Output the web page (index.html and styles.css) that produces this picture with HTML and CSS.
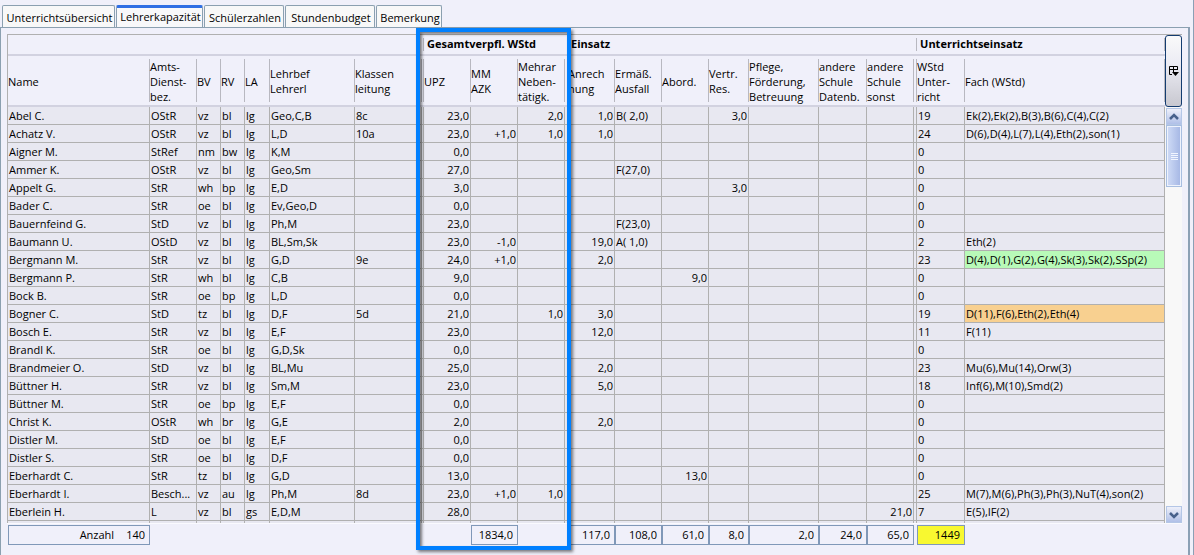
FILE: index.html
```html
<!DOCTYPE html>
<html lang="de">
<head>
<meta charset="utf-8">
<title>Lehrerkapazität</title>
<link rel="stylesheet" href="styles.css">
</head>
<body>
<div class="window">
  <nav class="tabs" role="tablist">
    <button class="tab tab-1" role="tab">Unterrichtsübersicht</button>
    <button class="tab tab-2 active" role="tab" aria-selected="true">Lehrerkapazität</button>
    <button class="tab tab-3" role="tab">Schülerzahlen</button>
    <button class="tab tab-4" role="tab">Stundenbudget</button>
    <button class="tab tab-5" role="tab">Bemerkung</button>
  </nav>
  <main class="panel">
    <div class="view">
      <div class="scroller">
        <table class="grid">
          <colgroup class="columns"></colgroup>
          <thead>
            <tr class="groups">
              <th colspan="7"></th><th class="sep"></th>
              <th colspan="3" class="plain">Gesamtverpfl. WStd</th><th class="sep"></th>
              <th colspan="7" class="plain">Einsatz</th><th class="sep"></th>
              <th colspan="2">Unterrichtseinsatz</th>
            </tr>
            <tr class="heads">
              <th>Name</th><th>Amts-<br>Dienst-<br>bez.</th><th>BV</th><th>RV</th><th>LA</th>
              <th>Lehrbef<br>Lehrerl</th><th>Klassen<br>leitung</th><th class="sep"></th>
              <th>UPZ</th><th>MM<br>AZK</th><th>Mehrar<br>Neben-<br>tätigk.</th><th class="sep"></th>
              <th>Anrech<br>nung</th><th>Ermäß.<br>Ausfall</th><th>Abord.</th><th>Vertr.<br>Res.</th>
              <th>Pflege,<br>Förderung,<br>Betreuung</th><th>andere<br>Schule<br>Datenb.</th>
              <th>andere<br>Schule<br>sonst</th><th class="sep"></th>
              <th>WStd<br>Unter-<br>richt</th><th>Fach (WStd)</th>
            </tr>
          </thead>
          <tbody id="rows"></tbody>
        </table>
      </div>
      <div class="side">
        <button class="column-button" aria-label="Spalten">
          <svg width="12" height="12" viewBox="0 0 12 12"><path d="M1.500 9.500V1.500H9.500V5M1.500 4.500H9.500M5.500 1.500V7M1.500 9.500H4" fill="none" stroke="#000"/><path d="M4 7H11L7.500 11Z"/></svg>
        </button>
        <div class="track">
          <button class="arrow" aria-label="Nach oben"><svg width="10" height="8" viewBox="0 0 10 8"><path d="M1 6L5 2L9 6" fill="none" stroke="#47618c" stroke-width="2.500"/></svg></button>
          <div class="thumb"><i></i><i></i><i></i><i></i></div>
          <button class="arrow down" aria-label="Nach unten"><svg width="10" height="8" viewBox="0 0 10 8"><path d="M1 2L5 6L9 2" fill="none" stroke="#47618c" stroke-width="2.500"/></svg></button>
        </div>
      </div>
    </div>
    <div class="summary">
      <table class="grid totals">
        <colgroup class="columns"></colgroup>
        <tbody><tr>
          <td class="box">Anzahl<span class="count">140</span></td><td colspan="8"></td>
          <td class="box">1834,0</td><td colspan="2"></td>
          <td class="box">117,0</td><td class="box">108,0</td><td class="box">61,0</td><td class="box">8,0</td>
          <td class="box">2,0</td><td class="box">24,0</td><td class="box">65,0</td><td></td>
          <td class="box total">1449</td><td></td>
        </tr></tbody>
      </table>
    </div>
    <div class="highlight"></div>
  </main>
</div>
<script src="table.js"></script>
</body>
</html>
```
FILE: styles.css
```css
* { box-sizing: border-box; }

body {
  margin: 0;
  background: #f0f0fa;
  color: #000;
  font: 11px/15px "Open Sans", "Noto Sans", sans-serif;
}

button { font: inherit; color: inherit; padding: 0; margin: 0; }

.window {
  display: flex;
  flex-direction: column;
  height: 100vh;
  padding-right: 3px;
  border-right: 1px solid #8ba0b5;
}

.tabs {
  display: flex;
  align-items: flex-end;
  gap: 1px;
  height: 27px;
  padding-left: 2px;
}

.tab {
  height: 22px;
  padding: 2px 0 0 2px;
  border: 1px solid #8ba0b0;
  border-bottom: 0;
  border-radius: 2px 2px 0 0;
  background: #f8f8f8;
  white-space: nowrap;
}
.tab-1 { width: 113px; }
.tab-2 { width: 87px; }
.tab-3 { width: 80px; }
.tab-4 { width: 90px; }
.tab-5 { width: 66px; }
.tab.active { border-top: 3px solid #2f6fe4; background: #f8f8fa; padding: 0 0 3px 2px; }

.panel {
  position: relative;
  flex: 1;
  min-height: 0;
  display: flex;
  flex-direction: column;
  padding: 6px 6px 10px 6px;
  border: 1px solid #8ba0b0;
  border-right: 2px solid #8ba0b5;
  border-bottom: 0;
}

.view { flex: 1; min-height: 0; display: flex; border-top: 1px solid #b0b0b0; border-bottom: 1px solid #fafafe; }
.scroller { flex: 1; min-width: 0; overflow: hidden; border-left: 1px solid #b0b0b0; }

.grid { width: 100%; table-layout: fixed; border-collapse: separate; border-spacing: 0; }
.w-name { width: 142px; }
.w-amt { width: 47px; }
.w-code { width: 24px; }
.w-la { width: 25px; }
.w-lehr { width: 85px; }
.w-klass { width: 67px; }
.w-edge { width: 2px; }
.w-gap { width: 3px; }
.w-vertr { width: 40px; }
.w-pflege { width: 70px; }
.w-sch { width: 48px; }

th {
  padding: 1px 0 0;
  text-align: left;
  font-weight: 400;
  white-space: nowrap;
  border-bottom: 2px solid #d2d2e0;
  background: linear-gradient(#b8b8c0, #b8b8c0) right center / 1px calc(100% - 6px) no-repeat;
}
.groups th { height: 21px; padding: 0 0 3px 3px; font-weight: 700; }
.groups .plain { background: none; }
.groups th:first-child { background: none; }
.heads th { height: 51px; }
.groups .sep, .heads .sep { padding: 0; }

tbody td {
  height: 18px;
  padding: 0 1px;
  overflow: hidden;
  white-space: nowrap;
  text-overflow: ellipsis;
  border-right: 1px solid #b0b0b0;
  border-bottom: 1px solid #b0b0b0;
  background: #e8e8f1;
}
tbody .num { text-align: right; }
tbody .sep { padding: 0; }
tbody .green { background: #b8fab8; }
tbody .orange { background: #f8d090; }

.side { width: 17px; display: flex; flex-direction: column; }
.column-button {
  height: 72px;
  display: flex;
  align-items: center;
  justify-content: center;
  border: 1px solid #143c70;
  border-radius: 3px;
  background: linear-gradient(#fafafa, #ececf4 40%, #c8c8d0);
}
.track { flex: 1; display: flex; flex-direction: column; background: #f8f8f8; padding: 1px 0 0 1px; }
.arrow {
  height: 17px;
  display: flex;
  align-items: center;
  justify-content: center;
  border: 1px solid #b4c6e6;
  background: linear-gradient(#eef0fa, #b0c0e8);
}
.arrow.down { margin-top: auto; }
.thumb {
  height: 62px;
  display: flex;
  flex-direction: column;
  align-items: center;
  justify-content: center;
  gap: 1px;
  border: 1px solid #a8bee0;
  box-shadow: inset 0 0 0 1px #eef2fc;
  background: linear-gradient(90deg, #d0dcf6, #a4b6e4);
}
.thumb i { width: 7px; height: 1px; background: #f2f6ff; }

.summary { padding: 1px 17px 0 1px; }
.totals td { height: 20px; padding: 0 4px 1px; border: 0; background: none; overflow: visible; text-align: right; }
.totals .box { border: 1px solid #8098b8; }
.totals .total { background: #f8f830; }
.count { margin-left: 12px; }

.highlight {
  position: absolute;
  top: 0;
  bottom: 5px;
  left: 415px;
  width: 155px;
  border: 4px solid #0080ff;
  box-shadow: 2px 2px 3px rgba(0, 0, 0, .5), inset 2px 2px 3px rgba(0, 0, 0, .5);
  pointer-events: none;
}
```
FILE: table.js
```js
const columns = ['name', 'amt', 'code', 'code', 'la', 'lehr', 'klass', 'edge', 'amt', 'amt', 'amt', 'gap',
  'amt', 'amt', 'amt', 'vertr', 'pflege', 'sch', 'amt', 'gap', 'sch', 'fach'];

document.querySelectorAll('.columns').forEach(group => {
  columns.forEach(name => {
    const col = document.createElement('col');
    col.className = 'w-' + name;
    group.append(col);
  });
});

// Name|Amt|BV|RV|LA|Lehrbef|Klasse|UPZ|MM|Mehrarbeit|Anrechnung|Ermäßigung|Abordnung|Vertretung|Pflege|Datenbank|sonst|WStd|Fach
const data = `Abel C.|OStR|vz|bl|lg|Geo,C,B|8c|23,0||2,0|1,0|B( 2,0)||3,0||||19|Ek(2),Ek(2),B(3),B(6),C(4),C(2)
Achatz V.|OStR|vz|bl|lg|L,D|10a|23,0|+1,0|1,0|1,0|||||||24|D(6),D(4),L(7),L(4),Eth(2),son(1)
Aigner M.|StRef|nm|bw|lg|K,M||0,0||||||||||0|
Ammer K.|OStR|vz|bl|lg|Geo,Sm||27,0||||F(27,0)||||||0|
Appelt G.|StR|wh|bp|lg|E,D||3,0||||||3,0||||0|
Bader C.|StR|oe|bl|lg|Ev,Geo,D||0,0||||||||||0|
Bauernfeind G.|StD|vz|bl|lg|Ph,M||23,0||||F(23,0)||||||0|
Baumann U.|OStD|vz|bl|lg|BL,Sm,Sk||23,0|-1,0||19,0|A( 1,0)||||||2|Eth(2)
Bergmann M.|StR|vz|bl|lg|G,D|9e|24,0|+1,0||2,0|||||||23|D(4),D(1),G(2),G(4),Sk(3),Sk(2),SSp(2)
Bergmann P.|StR|wh|bl|lg|C,B||9,0|||||9,0|||||0|
Bock B.|StR|oe|bp|lg|L,D||0,0||||||||||0|
Bogner C.|StD|tz|bl|lg|D,F|5d|21,0||1,0|3,0|||||||19|D(11),F(6),Eth(2),Eth(4)
Bosch E.|StR|vz|bl|lg|E,F||23,0|||12,0|||||||11|F(11)
Brandl K.|StR|oe|bl|lg|G,D,Sk||0,0||||||||||0|
Brandmeier O.|StD|vz|bl|lg|BL,Mu||25,0|||2,0|||||||23|Mu(6),Mu(14),Orw(3)
Büttner H.|StR|vz|bl|lg|Sm,M||23,0|||5,0|||||||18|Inf(6),M(10),Smd(2)
Büttner M.|StR|oe|bp|lg|E,F||0,0||||||||||0|
Christ K.|OStR|wh|br|lg|G,E||2,0|||2,0|||||||0|
Distler M.|StD|oe|bl|lg|E,F||0,0||||||||||0|
Distler S.|StR|oe|bl|lg|D,F||0,0||||||||||0|
Eberhardt C.|StR|tz|bl|lg|G,D||13,0|||||13,0|||||0|
Eberhardt I.|Besch...|vz|au|lg|Ph,M|8d|23,0|+1,0|1,0||||||||25|M(7),M(6),Ph(3),Ph(3),NuT(4),son(2)
Eberlein H.|L|vz|bl|gs|E,D,M||28,0|||||||||21,0|7|E(5),IF(2)
||||||||||||||||||`;

const numeric = [7, 8, 9, 10, 12, 13, 14, 15, 16];
const gapBefore = [7, 10, 17];
const marks = { 8: 'green', 11: 'orange' };
const body = document.getElementById('rows');

data.split('\n').forEach((line, row) => {
  const tr = body.insertRow();
  line.split('|').forEach((text, i) => {
    if (gapBefore.includes(i)) tr.insertCell().className = 'sep';
    const td = tr.insertCell();
    td.textContent = text;
    if (numeric.includes(i)) td.className = 'num';
    if (i === 18 && marks[row]) td.className = marks[row];
  });
});
```
